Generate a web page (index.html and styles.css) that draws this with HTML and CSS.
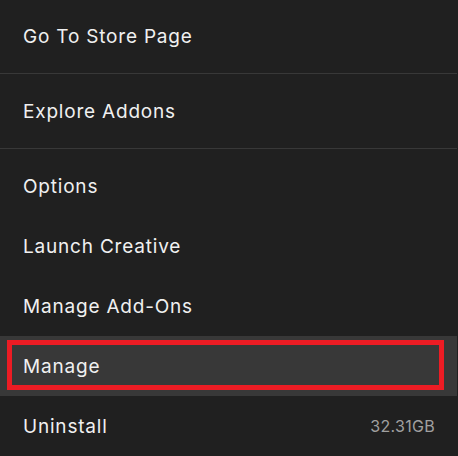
FILE: index.html
```html
<!DOCTYPE html>
<html>
<head>
<meta charset="utf-8">
<link rel="stylesheet" href="styles.css">
</head>
<body>
<div class="menu">
  <div class="section first">
    <div class="item"><span class="label">Go To Store Page</span></div>
  </div>
  <div class="section">
    <div class="item"><span class="label">Explore Addons</span></div>
  </div>
  <div class="section last">
    <div class="item"><span class="label">Options</span></div>
    <div class="item"><span class="label">Launch Creative</span></div>
    <div class="item"><span class="label">Manage Add-Ons</span></div>
    <div class="item hover"><span class="label">Manage</span><span class="outline"></span></div>
    <div class="item"><span class="label">Uninstall</span><span class="size">32.31GB</span></div>
  </div>
</div>
</body>
</html>
```
FILE: styles.css
```css
html, body {
  margin: 0;
  padding: 0;
  background: #202020;
}
.menu {
  width: 457px;
  height: 456px;
  background: #202020;
  font-family: Inter, "Noto Sans", sans-serif;
  overflow: hidden;
}
.section {
  padding: 7px 0;
  border-bottom: 1px solid #383838;
}
.section.first {
  padding-top: 6px;
}
.section.last {
  border-bottom: none;
  padding-bottom: 0;
}
.item {
  position: relative;
  height: 60px;
  display: flex;
  align-items: center;
  justify-content: space-between;
  padding: 0 22px 0 23px;
}
.label {
  color: #f0f0f0;
  font-size: 19px;
  letter-spacing: 0.8px;
  font-weight: 400;
}
.size {
  color: #a0a0a0;
  font-size: 16px;
  letter-spacing: 0.3px;
}
.item.hover {
  background: #383838;
}
.outline {
  position: absolute;
  left: 7px;
  top: 4px;
  width: 427px;
  height: 40px;
  border: 5px solid #ec1c24;
}
```
